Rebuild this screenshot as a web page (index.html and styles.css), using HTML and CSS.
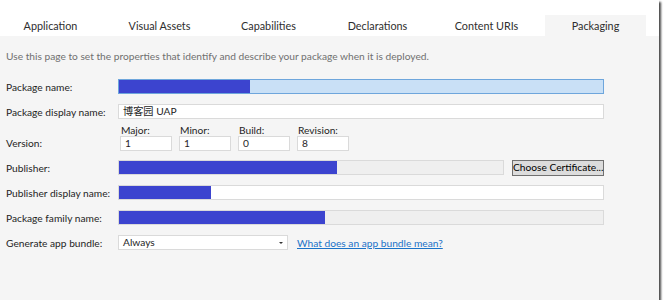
FILE: index.html
```html
<!DOCTYPE html>
<html lang="en">
<head>
    <meta charset="UTF-8">
    <title>Package.appxmanifest - Packaging</title>
    <link rel="stylesheet" href="styles.css">
</head>
<body>
    <div class="frame">
        <div class="tabs">
            <div class="tab">Application</div>
            <div class="tab">Visual Assets</div>
            <div class="tab">Capabilities</div>
            <div class="tab">Declarations</div>
            <div class="tab">Content URIs</div>
            <div class="tab active">Packaging</div>
        </div>
        <div class="page">
            <p class="intro">Use this page to set the properties that identify and describe your package when it is deployed.</p>

            <div class="row">
                <label>Package name:</label>
                <div class="field selected"><span class="mask" style="width: 131px"></span></div>
            </div>
            <div class="row">
                <label>Package display name:</label>
                <div class="field"><span class="value">博客园 UAP</span></div>
            </div>
            <div class="row version">
                <label>Version:</label>
                <div class="parts">
                    <div class="part"><span class="sub">Major:</span><div class="field"><span class="value">1</span></div></div>
                    <div class="part"><span class="sub">Minor:</span><div class="field"><span class="value">1</span></div></div>
                    <div class="part"><span class="sub">Build:</span><div class="field"><span class="value">0</span></div></div>
                    <div class="part"><span class="sub">Revision:</span><div class="field"><span class="value">8</span></div></div>
                </div>
            </div>
            <div class="row">
                <label>Publisher:</label>
                <div class="with-button">
                    <div class="field readonly"><span class="mask" style="width: 218px"></span></div>
                    <button class="cert">Choose Certificate...</button>
                </div>
            </div>
            <div class="row">
                <label>Publisher display name:</label>
                <div class="field"><span class="mask" style="width: 92px"></span></div>
            </div>
            <div class="row">
                <label>Package family name:</label>
                <div class="field readonly"><span class="mask" style="width: 206px"></span></div>
            </div>
            <div class="row">
                <label>Generate app bundle:</label>
                <div class="bundle">
                    <div class="field dropdown"><span class="value">Always</span><span class="arrow"></span></div>
                    <a href="#" class="help">What does an app bundle mean?</a>
                </div>
            </div>
        </div>
    </div>
</body>
</html>
```

FILE: styles.css
```css
body {
    margin: 0;
    background: #ffffff;
    font-family: Lato, "Noto Sans CJK SC", sans-serif;
    font-size: 10.2px;
    color: #1e1e1e;
}
.frame {
    width: 659px;
    height: 300px;
    background: #f5f5f5;
    box-shadow: 2px 2px 2px #4a4a4a;
    display: flex;
    flex-direction: column;
}
.tabs {
    display: flex;
    gap: 8px;
    height: 36px;
    background: #ffffff;
    align-items: flex-end;
}
.tab {
    width: 101px;
    height: 21px;
    line-height: 21px;
    text-align: center;
    color: #2e2e2e;
    font-size: 10.8px;
}
.tab.active {
    background: #f5f5f5;
}
.page {
    padding: 0 0 0 6px;
}
.intro {
    margin: 13px 0 11px 0;
    color: #707070;
    height: 14px;
    line-height: 14px;
}
.row {
    display: grid;
    grid-template-columns: 112px 486px;
    align-items: center;
    height: 25px;
}
.row label {
    line-height: 14px;
    white-space: nowrap;
}
.field {
    height: 15px;
    box-sizing: border-box;
    border: 1px solid #dadada;
    background: #ffffff;
    display: flex;
    align-items: center;
}
.field.selected {
    background: #c9e0f6;
    border-color: #6ea6dc;
}
.field.readonly {
    background: #efefef;
}
.mask {
    display: block;
    height: 13px;
    background: #3c44cf;
}
.value {
    padding-left: 4px;
    line-height: 13px;
}
.version {
    height: 31px;
    align-items: end;
    padding-bottom: 5px;
    box-sizing: border-box;
}
.version label {
    padding-bottom: 1px;
}
.parts {
    display: flex;
    gap: 7px;
    padding-left: 2px;
}
.part {
    display: flex;
    flex-direction: column;
    width: 52px;
}
.sub {
    line-height: 12px;
    padding-left: 1px;
}
.with-button {
    display: flex;
    gap: 8px;
}
.with-button .field {
    width: 386px;
}
.cert {
    width: 92px;
    height: 16px;
    margin: 0;
    padding: 0;
    border: 1px solid #707070;
    background: #dcdcdc;
    font-family: inherit;
    font-size: 10.2px;
    color: #000000;
    line-height: 13px;
    white-space: nowrap;
}
.bundle {
    display: flex;
    align-items: center;
    gap: 9px;
}
.dropdown {
    width: 170px;
    justify-content: space-between;
}
.arrow {
    width: 0;
    height: 0;
    border-left: 2px solid transparent;
    border-right: 2px solid transparent;
    border-top: 2px solid #333333;
    margin-right: 4px;
}
.help {
    color: #1b73c8;
    text-decoration: underline;
}
```
